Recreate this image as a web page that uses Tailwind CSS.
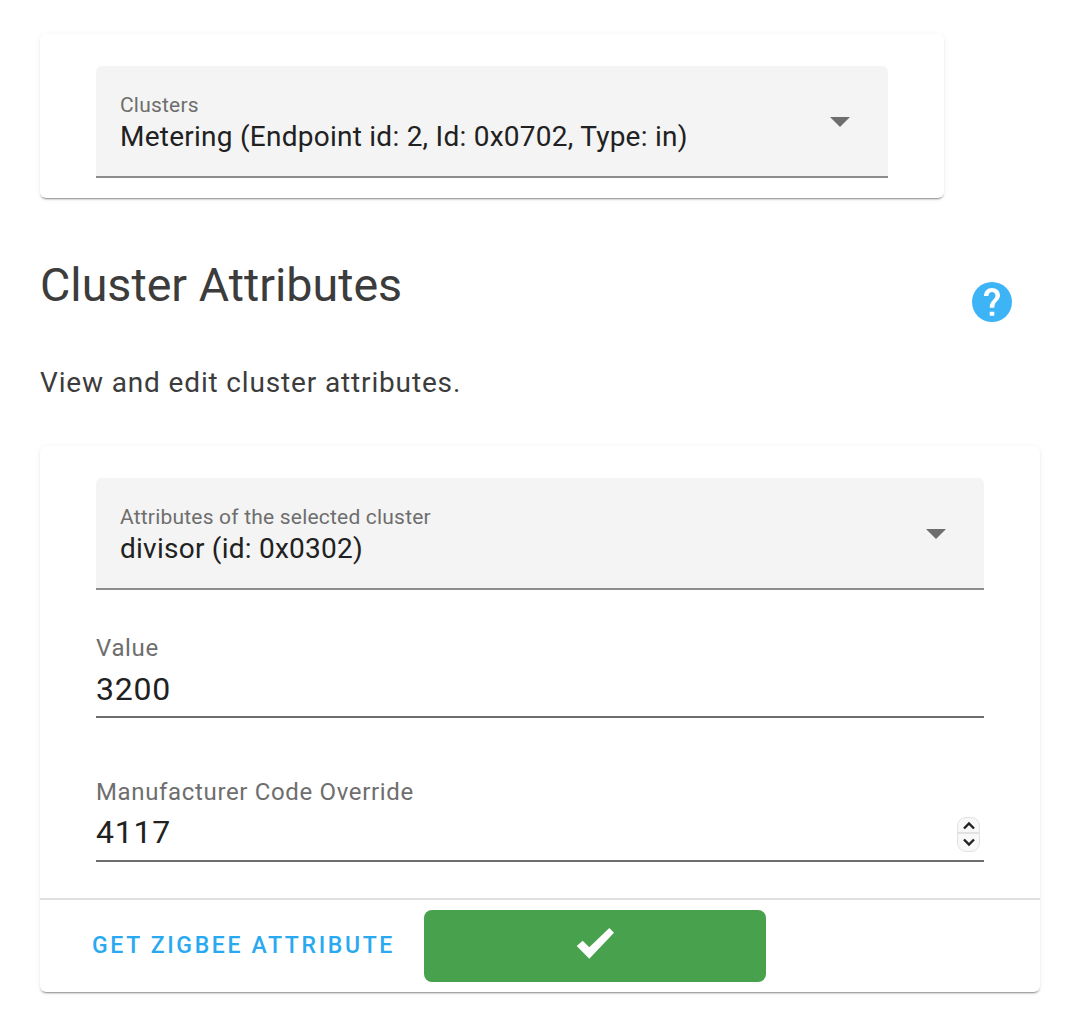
<!doctype html>
<html lang="en">
<head>
  <meta charset="UTF-8" />
  <title>Cluster Attributes</title>
  <script src="https://cdn.jsdelivr.net/npm/@tailwindcss/browser@4"></script>
</head>
<body class="bg-white font-['Roboto',sans-serif] text-[#212121] overflow-hidden">
  <main class="w-[1068px] h-[1012px] pt-[34px] pl-[40px]">
    <!-- Cluster select -->
    <section class="w-[904px] h-[164px] bg-white rounded-[6px] pt-[32px] px-[56px] shadow-[0_2px_2px_-1px_rgba(0,0,0,0.45),0_1px_6px_0_rgba(0,0,0,0.06)]">
      <div class="relative h-[112px] bg-[#f4f4f4] rounded-t-[6px] border-b-2 border-[#8c8c8c] pl-[24px] pt-[27px]">
        <div class="text-[21px] leading-[24px] text-[#6e6e6e] tracking-[0.2px]">Clusters</div>
        <div class="text-[28px] leading-[32px] mt-[4px] tracking-[0.25px]">Metering (Endpoint id: 2, Id: 0x0702, Type: in)</div>
        <svg class="absolute right-[38px] top-[51px]" width="20" height="10" viewBox="0 0 20 10"><path d="M0 0h20L10 10z" fill="#6e6e6e"/></svg>
      </div>
    </section>

    <!-- Heading -->
    <div class="relative w-[1000px] h-[248px]">
      <h2 class="absolute left-0 top-[55px] text-[46.6px] leading-[64px] text-[#3c3c3c]">Cluster Attributes</h2>
      <svg class="absolute left-[930px] top-[82px]" width="44" height="44" viewBox="0 0 44 44">
        <circle cx="22" cy="22" r="20" fill="#3cb4f5"/>
        <path d="M14 16c0-5 3.500-8 8-8s8 3 8 7.300c0 5.500-5.700 5.900-5.700 12.400h-4.600c0-7.600 5.700-8 5.700-12.300 0-2-1.500-3.400-3.400-3.400-2.100 0-3.400 1.500-3.500 4zM19.700 31.700h4.600v4h-4.600z" fill="#fff"/>
      </svg>
      <p class="absolute left-0 top-[167px] text-[28px] leading-[36px] text-[#3c3c3c] tracking-[0.85px]">View and edit cluster attributes.</p>
    </div>

    <!-- Attributes card -->
    <section class="w-[1000px] h-[546px] bg-white rounded-[6px] pt-[32px] shadow-[0_2px_2px_-1px_rgba(0,0,0,0.45),0_1px_6px_0_rgba(0,0,0,0.06)]">
      <div class="px-[56px]">
        <div class="relative h-[112px] bg-[#f4f4f4] rounded-t-[6px] border-b-2 border-[#8c8c8c] pl-[24px] pt-[27px]">
          <div class="text-[21px] leading-[24px] text-[#6e6e6e] tracking-[0.2px]">Attributes of the selected cluster</div>
          <div class="text-[28px] leading-[32px] mt-[4px] tracking-[0.25px]">divisor (id: 0x0302)</div>
          <svg class="absolute right-[38px] top-[51px]" width="20" height="10" viewBox="0 0 20 10"><path d="M0 0h20L10 10z" fill="#6e6e6e"/></svg>
        </div>

        <div class="h-[128px] border-b-2 border-[#6e6e6e] pt-[45px]">
          <div class="text-[24px] leading-[26px] text-[#6e6e6e] tracking-[0.65px]">Value</div>
          <div class="text-[32px] leading-[38px] mt-[9px] tracking-[0.8px]">3200</div>
        </div>

        <div class="relative h-[144px] border-b-2 border-[#6e6e6e] pt-[61px]">
          <div class="text-[24px] leading-[26px] text-[#6e6e6e] tracking-[0.65px]">Manufacturer Code Override</div>
          <div class="text-[32px] leading-[38px] mt-[8px] tracking-[0.8px]">4117</div>
          <div class="absolute right-[4px] top-[99px] w-[23px] h-[35px] rounded-[9px] bg-[#f8f8f8] border border-[#e2e2e2] flex flex-col">
            <div class="h-[16px] flex items-center justify-center border-b-2 border-[#e2e2e2]">
              <svg width="14" height="9" viewBox="0 0 14 9"><path d="M2 7.500l5-5 5 5" fill="none" stroke="#222" stroke-width="2.400"/></svg>
            </div>
            <div class="flex-1 flex items-center justify-center">
              <svg width="14" height="9" viewBox="0 0 14 9"><path d="M2 1.500l5 5 5-5" fill="none" stroke="#222" stroke-width="2.400"/></svg>
            </div>
          </div>
        </div>
      </div>

      <!-- Actions -->
      <div class="mt-[36px] h-[94px] border-t-2 border-[#e0e0e0] flex items-start pt-[10px] pl-[52px]">
        <button class="w-[332px] h-[72px] shrink-0 text-left text-[23px] font-medium tracking-[2.65px] text-[#29a9ef]">GET ZIGBEE ATTRIBUTE</button>
        <button class="w-[342px] h-[72px] shrink-0 bg-[#48a14d] rounded-[8px] flex items-center justify-center">
          <svg width="40" height="36" viewBox="0 0 40 36"><path d="M1.700 18l6-5.300 6.600 6.600L34.300 0l4.700 4.700-24.700 26z" fill="#fff"/></svg>
        </button>
      </div>
    </section>
  </main>
</body>
</html>
